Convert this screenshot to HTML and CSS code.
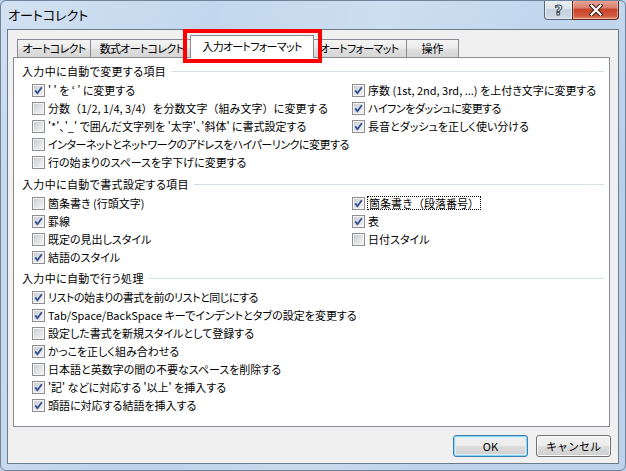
FILE: index.html
```html
<!DOCTYPE html>
<html lang="ja">
<head>
<meta charset="utf-8">
<title>オートコレクト</title>
<link rel="stylesheet" href="styles.css">
</head>
<body>
<div class="window">
  <div class="titlebar">
    <span class="title">オートコレクト</span>
    <div class="caption-btns">
      <span class="cap-help">?</span>
      <span class="cap-close"><svg width="14" height="12" viewBox="0 0 14 12"><path d="M2.5 1.5 L11.5 10.5 M11.5 1.5 L2.5 10.5" stroke="#3b1c17" stroke-width="4.2" stroke-linecap="square" fill="none"/><path d="M2.5 1.5 L11.5 10.5 M11.5 1.5 L2.5 10.5" stroke="#ffffff" stroke-width="2.2" stroke-linecap="square" fill="none"/></svg></span>
    </div>
  </div>
  <div class="client">
    <div class="tabs">
      <div class="tab t1">オートコレクト</div>
      <div class="tab t2">数式オートコレクト</div>
      <div class="tab t3 active">入力オートフォーマット</div>
      <div class="tab t4">オートフォーマット</div>
      <div class="tab t5">操作</div>
    </div>
    <div class="panel">
      <section class="group g1">
        <div class="group-head">入力中に自動で変更する項目</div>
        <div class="cols">
          <div class="col">
            <div class="row"><span class="cb on"><svg viewBox="0 0 13 13"><path d="M3.3 6.4 L5.4 9.2 L9.8 3.2"/></svg></span><span class="lbl">' ' を ‘ ’ に変更する</span></div>
            <div class="row"><span class="cb"></span><span class="lbl wide">分数（1/2, 1/4, 3/4）を分数文字（組み文字）に変更する</span></div>
            <div class="row"><span class="cb"></span><span class="lbl">'*'、'_' で囲んだ文字列を '太字'、'斜体' に書式設定する</span></div>
            <div class="row"><span class="cb"></span><span class="lbl kana">インターネットとネットワークのアドレスをハイパーリンクに変更する</span></div>
            <div class="row"><span class="cb"></span><span class="lbl">行の始まりのスペースを字下げに変更する</span></div>
          </div>
          <div class="col">
            <div class="row"><span class="cb on"><svg viewBox="0 0 13 13"><path d="M3.3 6.4 L5.4 9.2 L9.8 3.2"/></svg></span><span class="lbl">序数 (1st, 2nd, 3rd, ...) を上付き文字に変更する</span></div>
            <div class="row"><span class="cb on"><svg viewBox="0 0 13 13"><path d="M3.3 6.4 L5.4 9.2 L9.8 3.2"/></svg></span><span class="lbl kana">ハイフンをダッシュに変更する</span></div>
            <div class="row"><span class="cb on"><svg viewBox="0 0 13 13"><path d="M3.3 6.4 L5.4 9.2 L9.8 3.2"/></svg></span><span class="lbl">長音とダッシュを正しく使い分ける</span></div>
          </div>
        </div>
      </section>
      <section class="group g2">
        <div class="group-head">入力中に自動で書式設定する項目</div>
        <div class="cols">
          <div class="col">
            <div class="row"><span class="cb"></span><span class="lbl">箇条書き (行頭文字)</span></div>
            <div class="row"><span class="cb on"><svg viewBox="0 0 13 13"><path d="M3.3 6.4 L5.4 9.2 L9.8 3.2"/></svg></span><span class="lbl">罫線</span></div>
            <div class="row"><span class="cb"></span><span class="lbl">既定の見出しスタイル</span></div>
            <div class="row"><span class="cb on"><svg viewBox="0 0 13 13"><path d="M3.3 6.4 L5.4 9.2 L9.8 3.2"/></svg></span><span class="lbl">結語のスタイル</span></div>
          </div>
          <div class="col">
            <div class="row"><span class="cb on"><svg viewBox="0 0 13 13"><path d="M3.3 6.4 L5.4 9.2 L9.8 3.2"/></svg></span><span class="lbl focus">箇条書き（段落番号）</span></div>
            <div class="row"><span class="cb on"><svg viewBox="0 0 13 13"><path d="M3.3 6.4 L5.4 9.2 L9.8 3.2"/></svg></span><span class="lbl">表</span></div>
            <div class="row"><span class="cb"></span><span class="lbl">日付スタイル</span></div>
          </div>
        </div>
      </section>
      <section class="group g3">
        <div class="group-head">入力中に自動で行う処理</div>
        <div class="col single">
          <div class="row"><span class="cb on"><svg viewBox="0 0 13 13"><path d="M3.3 6.4 L5.4 9.2 L9.8 3.2"/></svg></span><span class="lbl kana">リストの始まりの書式を前のリストと同じにする</span></div>
          <div class="row"><span class="cb on"><svg viewBox="0 0 13 13"><path d="M3.3 6.4 L5.4 9.2 L9.8 3.2"/></svg></span><span class="lbl">Tab/Space/BackSpace キーでインデントとタブの設定を変更する</span></div>
          <div class="row"><span class="cb"></span><span class="lbl">設定した書式を新規スタイルとして登録する</span></div>
          <div class="row"><span class="cb on"><svg viewBox="0 0 13 13"><path d="M3.3 6.4 L5.4 9.2 L9.8 3.2"/></svg></span><span class="lbl">かっこを正しく組み合わせる</span></div>
          <div class="row"><span class="cb"></span><span class="lbl">日本語と英数字の間の不要なスペースを削除する</span></div>
          <div class="row"><span class="cb on"><svg viewBox="0 0 13 13"><path d="M3.3 6.4 L5.4 9.2 L9.8 3.2"/></svg></span><span class="lbl">'記' などに対応する '以上' を挿入する</span></div>
          <div class="row"><span class="cb on"><svg viewBox="0 0 13 13"><path d="M3.3 6.4 L5.4 9.2 L9.8 3.2"/></svg></span><span class="lbl">頭語に対応する結語を挿入する</span></div>
        </div>
      </section>
    </div>
    <div class="buttons">
      <button class="btn default">OK</button>
      <button class="btn">キャンセル</button>
    </div>
  </div>
  <div class="callout"></div>
</div>
</body>
</html>
```

FILE: styles.css
```css
html, body {
  margin: 0;
  padding: 0;
  background: #b9d0e8;
}
body {
  font-family: "Noto Sans CJK JP", "Noto Sans", sans-serif;
  font-size: 11px;
  color: #000;
  font-feature-settings: "palt";
}
.window {
  position: relative;
  width: 626px;
  height: 471px;
  box-sizing: border-box;
  border: 1px solid #6f849b;
  border-radius: 6px;
  padding: 0 6px 6px 6px;
  display: flex;
  flex-direction: column;
  background:
    linear-gradient(100deg, rgba(255,255,255,0.25) 0%, rgba(255,255,255,0) 30%, rgba(255,255,255,0.18) 55%, rgba(255,255,255,0) 75%),
    linear-gradient(180deg, #c3d8ee 0%, #b8cfe8 40%, #bdd3ea 100%);
  overflow: hidden;
}
.titlebar {
  height: 28px;
  flex: none;
  display: flex;
  align-items: flex-start;
  justify-content: space-between;
}
.title {
  margin-top: 6px;
  padding-left: 1px;
  font-size: 13px;
  line-height: 16px;
  color: #000;
}
.caption-btns {
  display: flex;
  margin-top: -1px;
}
.cap-help, .cap-close {
  height: 20px;
  box-sizing: border-box;
  display: flex;
  align-items: center;
  justify-content: center;
  border: 1px solid #56687d;
  border-top: none;
}
.cap-help {
  width: 28px;
  border-right: none;
  border-radius: 0 0 0 4px;
  background: linear-gradient(180deg, #eef2f7 0%, #dbe3ec 45%, #c6d2df 50%, #cfdae6 100%);
  box-shadow: inset 0 0 0 1px rgba(255,255,255,0.55);
  font-family: "DejaVu Sans", sans-serif;
  font-weight: bold;
  font-size: 14px;
  line-height: 14px;
  color: #f4f6f8;
  -webkit-text-stroke: 1px #3d4a58;
}
.cap-close {
  width: 47px;
  border-color: #5a2a22;
  border-radius: 0 0 4px 0;
  background: linear-gradient(180deg, #e9a899 0%, #d9826f 40%, #c7432a 50%, #d35a3f 85%, #e69a7c 100%);
  box-shadow: inset 0 0 0 1px rgba(255,220,210,0.45);
}
.client {
  flex: 1;
  border: 1px solid #6b7b8c;
  background: #f0f0f0;
  display: flex;
  flex-direction: column;
}
.tabs {
  display: flex;
  align-items: flex-end;
  height: 22px;
  margin: 5px 0 0 9px;
}
.tab {
  box-sizing: border-box;
  height: 18px;
  border: 1px solid #898c95;
  border-bottom: none;
  background: linear-gradient(180deg, #f4f4f4 0%, #ececec 45%, #dfdfdf 55%, #d6d6d6 100%);
  text-align: center;
  line-height: 17px;
  white-space: nowrap;
  letter-spacing: -0.7px;
}
.t1 { width: 74px; }
.t2 { width: 103px; margin-left: -1px; }
.t3 { width: 124px; margin-left: -3px; }
.t4 { width: 96px; margin-left: -3px; }
.t5 { width: 53px; margin-left: -1px; letter-spacing: 0; }
.tab.active {
  position: relative;
  z-index: 2;
  height: 23px;
  margin-bottom: -1px;
  background: #ffffff;
  line-height: 21px;
}
.panel {
  position: relative;
  z-index: 1;
  height: 370px;
  box-sizing: border-box;
  margin: 0 8px 0 5px;
  border: 1px solid #898c95;
  background: #ffffff;
  padding: 4px 5px 0 8px;
}
.group-head {
  height: 19px;
  display: flex;
  align-items: center;
  gap: 5px;
  white-space: nowrap;
  padding-bottom: 1px;
  box-sizing: border-box;
  letter-spacing: 0.35px;
}
.group-head::after {
  content: "";
  flex: 1;
  height: 1px;
  background: #d5dfe5;
}
.g2 { margin-top: 4px; }
.g3 { margin-top: 3px; }
.cols {
  display: grid;
  grid-template-columns: 320px 1fr;
  padding-left: 10px;
}
.single {
  padding-left: 10px;
}
.row {
  height: 18px;
  display: flex;
  align-items: center;
  white-space: nowrap;
}
.cb {
  flex: none;
  width: 13px;
  height: 13px;
  box-sizing: border-box;
  border: 1px solid #8e8f8f;
  background: linear-gradient(135deg, #c3c8ce 0%, #e2e4e7 55%, #f5f5f5 100%);
  box-shadow: inset 0 0 0 1px #f4f4f4;
  position: relative;
}
.cb svg {
  position: absolute;
  left: -1px;
  top: -1px;
  width: 13px;
  height: 13px;
}
.cb svg path {
  fill: none;
  stroke: #2f4d92;
  stroke-width: 1.8;
  stroke-linejoin: miter;
}
.lbl {
  margin-left: 3px;
  line-height: 14px;
}
.lbl.wide {
  font-feature-settings: normal;
}
.lbl.kana {
  letter-spacing: -0.5px;
}
.lbl.focus {
  margin-left: 2px;
  padding: 0 1px;
  line-height: 12px;
  border: 1px dotted #000;
  font-feature-settings: normal;
}
.buttons {
  display: flex;
  justify-content: flex-end;
  gap: 8px;
  margin: 8px 7px 0 0;
}
.btn {
  width: 75px;
  height: 22px;
  box-sizing: border-box;
  border: 1px solid #707070;
  border-radius: 3px;
  background: linear-gradient(180deg, #f2f2f2 0%, #ebebeb 50%, #dddddd 50%, #cfcfcf 100%);
  box-shadow: inset 0 0 0 1px #fbfbfb;
  font-family: inherit;
  font-size: 11px;
  color: #000;
  padding: 0;
}
.btn.default {
  border-color: #3c7fb1;
  box-shadow: inset 0 0 0 1px #8fd4f6, inset 0 0 0 2px #d8f0fb;
}
.callout {
  position: absolute;
  left: 182px;
  top: 28px;
  width: 139px;
  height: 34px;
  box-sizing: border-box;
  border: 4px solid #ff0000;
  z-index: 5;
}
```
